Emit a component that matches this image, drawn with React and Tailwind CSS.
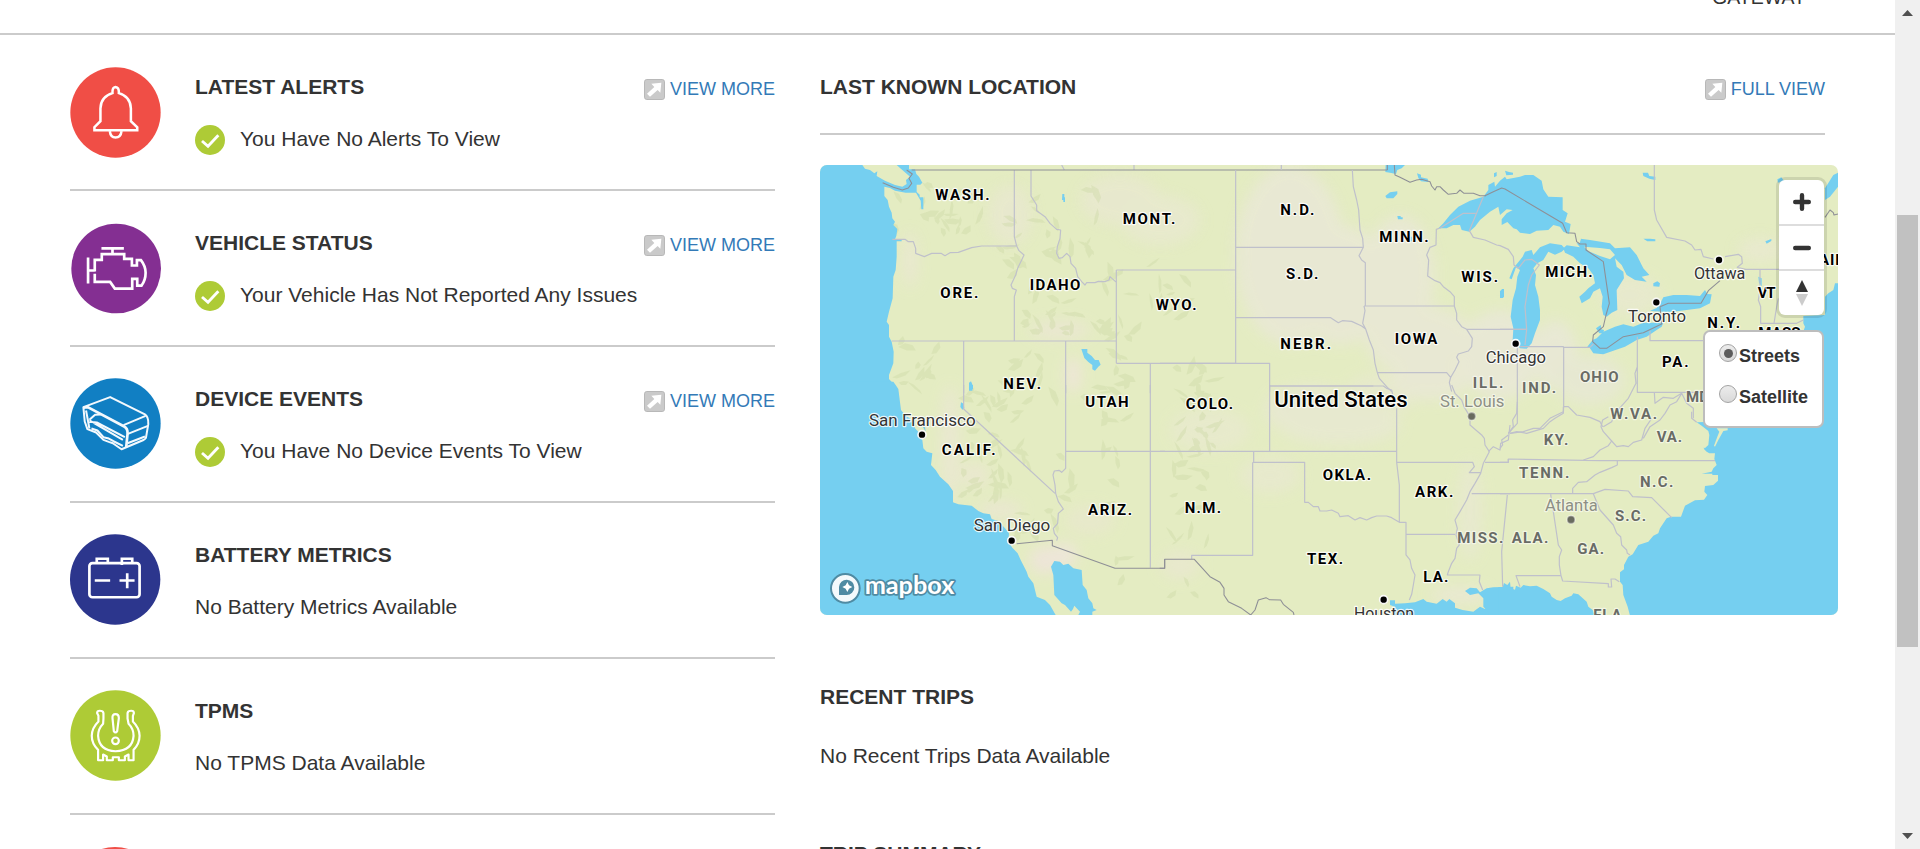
import React from "react";

const WATER = "#75cff0";

/* Map tiles: each tile is drawn on its own 3x grid and shifted into place. */
const TILES = [
  {
    at: "translate(-5 -5) scale(0.33333)",
    water: [
      "M15,15H142L150,26 165,30 178,40 187,34 185,48 210,62 240,75 262,80 275,72 273,60 285,50 262,30 255,24 245,15H282V28H300L304,42 312,50 322,68 316,74 305,74 305,96 314,104 314,112 325,112V148H319L317,122 303,98H272L240,92 225,84 208,80V108L218,120 222,140 230,158 232,175 240,185 235,195 247,207 244,228 240,238H260V244H245L245,290 242,330 235,350 233,415 222,455 215,485 222,495V530L230,545 236,575 235,610 222,645 222,657 242,678 250,700H15Z",
      "M742,102h6v10h2v14h-5v-6h-4z",
      "M799,567H817V578L830,588 840,600 851,600 857,614 850,620 840,632 832,628 832,615 820,606 808,594Z",
      "M462,668l6,-4 6,14 -2,14 -10,0z",
    ],
    state:
      "M598,30V230L605,258 L612,272 627,285 620,300 608,325 602,345 588,375 592,385 604,390 598,410V543 M648,30V108L665,135 665,152 690,170 705,190 725,208 737,210 735,235 727,260 725,280 732,295 742,293 755,280 765,290 768,310 782,325 788,350 800,365 810,375 815,368 840,368 850,364 870,365 882,360 885,350 905,368 M904,330V610 M230,543H904 M446,543V700 M752,543V700 M904,330H1262 M904,610H1262 M1006,610V700 M232,238H270L280,245 295,245 302,265 302,280 328,290 350,280 378,280 390,287 405,278 430,277 470,263 500,258H603 M740,15l8,15 M957,15v15",
    nation: "M290,30H1717 M203,68L235,82 262,90 280,84 290,70 282,55 292,42 275,30",
    labels: [
      ["WASH.", 361, 121, 163], ["ORE.", 376, 415, 114], ["IDAHO", 644, 389, 152],
      ["NEV.", 565, 688, 113], ["MONT.", 923, 193, 158], ["WYO.", 1022, 450, 123],
    ],
  },
  {
    at: "translate(340 -5) scale(0.33333)",
    water: [
      "M677,15H735L725,25 712,30 708,42 690,38 676,36Z",
      "M771,40l12,4 0,8 20,4 2,10 -22,-2 -8,-10z",
      "M676,108L690,97 712,94 712,102 700,115 680,115Z",
      "M712,168h10l0,4h6l0,6h-14z M750,230h6v14h-6z",
      "M1020,395l6,-8h6v24h-10z",
    ],
    state:
      "M227,30V610 M227,262H610 M227,473H512L535,488 547,482 575,484 605,498 617,507 M577,30L580,80 590,120 596,150 600,210 608,235 610,262 597,287 605,300 616,308V438 M612,438H883 M612,438L615,452 608,490 617,507 628,540 640,570 645,610 652,638 658,655 680,680 695,695 M652,638H860L872,652 M883,438L883,410 870,395 850,380 840,368 825,362 803,348 806,300 800,285 810,262 828,255 829,208 840,204 M883,438L890,460 890,480 905,500 920,508 937,535 935,560 925,573 895,582 890,592 897,605 885,630 872,652 868,668 875,695 M920,508H1100 M0,610H329V695 M329,678H640 M364,15v15",
    nation:
      "M682,15V30 M703,15L705,45 720,52 750,67 770,60 785,58 810,65 815,78 825,90 830,80 840,80 850,90 865,103 890,100 900,90 912,100 940,100 960,107 978,107",
    labels: [
      ["N.D.", 361, 165, 102], ["S.D.", 378, 356, 97], ["MINN.", 658, 247, 148],
      ["NEBR.", 361, 567, 152], ["IOWA", 704, 551, 128], ["WIS.", 904, 367, 110],
      ["ILL.", 938, 683, 92, "g"],
    ],
  },
  {
    at: "translate(680 -5) scale(0.33333)",
    water: [
      "M-185,205L-170,190 -150,165 -125,140 -90,122 -50,110 -35,90 -35,75 -17,65 -15,80 0,62 15,50 20,58 60,50 75,45 100,45 125,62 130,88 145,110 188,112V150L203,160 195,185 212,192 207,222 190,215 180,200 160,195 145,210 110,212 90,222 60,218 50,208 40,205 22,186 5,195 5,178 20,160 38,150 20,148 0,165 -5,140 -30,155 -60,180 -75,200 -92,215 -115,210 -120,195 -140,195 -160,205Z",
      "M15,32l12,4 12,2 0,6 -20,2z M-18,40l8,-4 0,12 -8,4z",
      "M60,565L38,540 40,505 32,470 38,420 48,385 52,350 60,330 48,322 35,358 28,355 40,325 68,290 75,275 95,270 100,285 120,262 150,250 185,255 195,266 185,275 165,284 145,275 130,300 112,310 100,325 108,345 105,375 115,410 120,450 120,480 105,520 95,550 80,566Z",
      "M190,265L200,256 240,262 230,250 242,236 270,240 330,250 345,265 390,262 410,285 430,325 448,345 425,350 440,365 405,360 380,345 365,315 345,295 350,320 370,335 372,355 350,390 352,450 335,458 320,470 310,465 305,440 308,410 300,385 280,395 270,415 245,430 238,410 255,395 265,385 285,370 280,345 265,325 240,310 220,290 195,278Z",
      "M262,560L278,540 290,535 310,515 345,500 370,493 400,500 430,488 490,488 485,500 470,510 440,530 410,540 375,560 340,572 310,583 280,580 270,565Z",
      "M450,452L470,444 482,428 490,412 520,405 560,405 600,408 615,390 622,402 635,403 630,430 600,445 560,450 520,455 490,455 462,454Z",
      "M288,505L302,495 304,508 312,510 310,520 298,520Z M460,370l12,-6 8,6 -2,10 -18,-1z M430,236h20l16,2v6h-24z M428,38l16,0 4,10 18,2 0,10 -18,-4 -18,-8z M796,244l18,-7 0,6 -14,8z M775,350l10,5 0,24 -8,-10z M0,392h10v22h-10z M832,58l12,-6 8,10 -18,6z",
      "M975,85L1000,45 1014,38V80L990,110 975,120Z",
      "M1014,370H1005L1000,390 985,400 975,410V465L910,468V490L915,500 908,520 770,520 770,850H1014Z",
    ],
    land: ["M252,260L300,264 330,268 345,285 330,298 300,288 266,274Z M235,232l8,4 -4,14 -10,0z"],
    state:
      "M-180,205L-110,160H-73 M-50,110L-92,212 -80,232 -45,240 -10,255 0,257 25,268 40,290 42,315 55,325 L75,300 95,298 118,315 95,345 85,375 75,440 80,508 75,555 M60,560H190V562L270,562 280,552 M52,560V790L25,820 M191,560V740 M0,508H80 M450,512V542H612 M412,530V697H550L610,697 M412,620L405,640 408,670 385,715 345,760 335,785 310,800 M191,740L205,740 230,765 270,772 300,785 308,800 M191,740L190,760 165,775 150,785 130,805 80,820 50,815 30,820 M780,330V390L775,420 782,440V490H890L910,480 M835,415L830,440 822,490 M463,697L465,730 490,712 520,715 545,700 560,730 580,745 580,775 M545,700L530,725 510,735 495,760 480,780 450,800 430,835 M463,15V150L470,180 500,232 555,243 575,255 585,270 603,268 610,290 640,297 M675,290L715,283 725,290 727,310 712,322 737,328H837",
    nation:
      "M-45,107L-20,95 5,84 15,87 188,190 200,218 225,220 230,245 240,252 258,252 258,270 310,305 328,430 318,465 310,500 280,525 278,545 300,565 320,565 370,530 430,518 485,492 480,440 505,430H603L625,392 660,362 M975,172L990,150 1000,158 1002,165 1014,162",
    labels: [
      ["MICH.", 136, 351, 142], ["N.Y.", 622, 504, 98], ["VT", 773, 413, 54], ["MAINE", 915, 315, 150],
      ["PA.", 486, 620, 80], ["MASS.", 775, 535, 140], ["OHIO", 240, 666, 116, "g"], ["IND.", 66, 698, 102, "g"],
      ["MD.", 558, 727, 80, "g"], ["W.VA.", 331, 777, 140, "g"],
      ["Chicago", -43, 608, 181, "c"], ["Ottawa", 582, 358, 154, "c"], ["Toronto", 384, 485, 174, "c"],
    ],
    dots: [[47, 551], [657, 300], [469, 427]],
  },
  {
    at: "translate(-5 220) scale(0.33333)",
    water: [
      "M15,-10H235L242,0 250,12 258,75 270,90 295,108 300,130 310,140 322,165 325,190 335,200 352,205 348,240 362,255 375,275 400,298 414,318V352L430,358 470,362 490,378 505,385 525,388 530,402 550,408 570,430 582,445 580,470 592,488 608,505 617,525 635,560 640,575 655,595 665,635 690,645 705,660 722,690H15Z",
      "M708,545L718,528 735,530 745,540 760,536 775,550 800,555 803,600 815,615 820,640 832,655 835,670 845,675 832,680 832,690H790L795,680 778,662 774,672 768,680 750,660 740,655 718,630 715,570Z",
      "M438,52l8,4 2,14 -6,4 -6,-8z M462,0h12v12h-6z M332,140l-8,-14 6,0z",
    ],
    state:
      "M446,0V72L720,325 M752,0V250L740,262 732,256 718,258 714,270 720,300 722,325 730,350 745,372 730,385 728,415 715,430 718,445 728,458 725,467 M752,199H1050 M1006,0V548",
    nation: "M605,476L712,466V482L900,550H1049V523",
    labels: [
      ["UTAH", 811, 67, 130], ["CALIF.", 380, 210, 162], ["ARIZ.", 819, 390, 132],
      ["San Francisco", 162, 122, 320, "c"], ["San Diego", 476, 439, 230, "c"],
    ],
    dots: [[321, 149], [590, 467]],
  },
  {
    at: "translate(340 220) scale(0.33333)",
    water: [
      "M690,646H705V656L735,655 765,652 790,642 800,650 830,656 848,642 860,650 868,642 885,655 885,668 908,675 940,680 960,665 975,672 992,655 1000,675 1050,690H705L705,665 690,660Z",
      "M915,618L930,608 950,610 960,622 980,610 1000,607 1060,605V695H985L985,680 970,665 970,640 955,625 930,630Z",
    ],
    state:
      "M0,199H710 M329,0V199 M329,3H670L680,10 695,15 698,28 M281,199V232H434V352L445,352 460,365 475,365 480,378 500,378 515,375 535,385 540,395 565,392 585,405 600,398 620,405 635,398 650,393 680,393 695,398 718,412H738V510L750,525 755,550 765,570 760,600 755,628 748,645 M278,232V511H95V522 M710,70V232L718,300V410 M710,232H938L943,245 928,263H962 M738,448H885 M875,0L885,25 905,45 912,65 930,95 930,120 965,150 973,160 975,180 988,200 970,235 962,265 945,295 930,320 920,345 900,380 885,405 892,430 888,450 898,480 890,490 885,520 875,535 865,560 862,570H960L958,590 968,615 M985,200L1000,185 1020,195 1022,175 1045,165 1050,120 M975,232H1045V222 M935,326H1050",
    nation:
      "M-1,550H14V523H103L150,575 180,592 192,610 192,630 205,650 245,670 272,690 285,675 295,645 318,638 328,644 362,645 370,658 400,682 402,690",
    labels: [
      ["COLO.", 77, 72, 142], ["OKLA.", 488, 285, 145], ["N.M.", 74, 384, 109], ["ARK.", 765, 335, 115],
      ["TEX.", 441, 537, 108], ["LA.", 790, 590, 75], ["MISS.", 892, 473, 138, "g"],
      ["United States", 343, 67, 400, "u"], ["St. Louis", 840, 66, 193, "cg"], ["Houston", 582, 703, 180, "c"],
    ],
    dots: [[935, 94, "g"], [671, 644]],
  },
  {
    at: "translate(680 220) scale(0.33333)",
    water: [
      "M590,112L605,122 625,138 628,150 625,180 612,192 620,200 628,205 645,205 643,222 650,240 640,250 635,260 605,266 637,266 637,270H654V287L640,300 615,303 613,320 622,330 612,344 585,346 555,362 543,395 513,395 500,400 480,430 475,445 460,452 445,470 415,480 398,508 385,515 372,540V553L360,562V590L368,600 370,630 383,665 390,692H1020V100Z",
      "M-5,606H8L12,594 22,600 30,590 32,610 45,614 48,602 62,608 70,600 90,604 110,602 130,612 150,625 155,635 170,645 182,648 195,640 215,632 220,625 235,628 260,650 265,665 278,675 285,692H-5Z",
      "M610,188l12,2 4,12 -6,-4z",
    ],
    land: ["M650,130H683V136L670,138 655,165 645,185 642,182 652,155 658,140Z"],
    state:
      "M0,232H25V222L300,227H645 M0,326H280L315,313 385,318 388,322 398,335 455,338 515,398 M218,326L218,310 235,292 260,290 285,270 300,262 335,248 352,240V227 M22,330L5,500 8,605 M152,328L160,380 175,480 185,495 178,515 178,540 183,572H48L60,605 M183,572L188,588 325,596V606H335L333,582 345,582 358,590 M280,326L300,375 340,420 350,445 362,455 365,480 380,495 382,505 390,510 M250,225L280,215 300,195 325,182 335,168 310,140 303,125 308,105 325,95 M335,168L350,185 370,182 385,185 400,172 425,165 435,130 455,100 M30,145L70,140 100,130 120,130 150,100 190,80 190,65 M0,190L8,180 5,165 25,150 M25,145L40,125 38,105 50,85 52,50 M575,80L575,100 590,112",
    nation: "",
    labels: [
      ["KY.", 131, 180, 74, "g"], ["VA.", 470, 172, 76, "g"], ["TENN.", 57, 279, 151, "g"], ["N.C.", 420, 306, 100, "g"],
      ["ALA.", 35, 475, 110, "g"], ["GA.", 232, 506, 80, "g"], ["S.C.", 345, 409, 93, "g"],
      ["FLA.", 280, 705, 100, "g"], ["Atlanta", 135, 377, 158, "cg"],
    ],
    dots: [[213, 404, "g"]],
  },
];

/* Soft prairie and desert patches: cx, cy, rx, ry, colour */
const PATCHES = [
  [470, 90, 55, 90, "#e9e8d6"], [520, 120, 50, 60, "#e9e8d6"], [580, 110, 35, 60, "#e9e8d6"],
  [600, 175, 55, 35, "#e9e8d6"], [560, 230, 35, 22, "#e7e9cd"], [490, 245, 45, 25, "#e8e8d3"],
  [680, 190, 40, 45, "#e9e8d8"], [735, 190, 22, 35, "#e9e8d8"], [190, 50, 22, 30, "#e8e8cf"],
  [300, 35, 40, 25, "#e8e8cf"], [340, 55, 40, 25, "#e8e9cf"], [240, 165, 30, 9, "#ebe6d4"],
  [253, 210, 8, 18, "#f0e5dc"], [90, 95, 7, 28, "#ebe7d4"], [130, 280, 9, 60, "#ebe7d4"],
  [155, 310, 14, 12, "#ebe7d2"], [225, 395, 16, 14, "#efe4dc"], [245, 390, 12, 12, "#f0e5de"],
  [180, 345, 22, 8, "#ebe6d4"], [390, 265, 40, 22, "#e8eacd"], [450, 310, 30, 18, "#e8e9cf"],
  [640, 430, 30, 8, "#ebe8d6"], [360, 400, 20, 14, "#e9e8cf"], [810, 130, 30, 20, "#e8e9cf"],
  [940, 85, 22, 12, "#e9e9d0"], [770, 215, 35, 25, "#e7e8d4"], [270, 355, 25, 15, "#e8e8cc"],
  [650, 345, 12, 50, "#e8e9d0"], [520, 260, 60, 20, "#e8e9d2"], [610, 215, 40, 20, "#e9e8d6"],
];

/* Mountain ranges: cx, cy, spread x, spread y, count */
const RANGES = [
  [110, 40, 60, 30, 14], [130, 50, 30, 20, 8], [240, 60, 60, 45, 22], [190, 105, 20, 30, 6],
  [245, 145, 55, 28, 22], [330, 135, 55, 50, 22], [100, 200, 25, 30, 12], [175, 270, 40, 55, 20],
  [170, 300, 35, 40, 18], [205, 215, 40, 35, 14], [285, 225, 30, 50, 16], [380, 245, 28, 55, 28],
  [270, 310, 40, 40, 10], [370, 330, 22, 50, 12], [215, 370, 25, 30, 8], [340, 400, 60, 35, 8],
];

function hash(n) {
  const s = Math.sin(n * 127.1 + 11.7) * 43758.5453;
  return s - Math.floor(s);
}

/* Each hill is an irregular five-cornered sliver with its own direction. */
const HILLS = RANGES.flatMap(([cx, cy, sx, sy, count], r) =>
  Array.from({ length: count }, (_, i) => {
    const k = r * 100 + i * 7;
    const x = cx + (hash(k) - 0.5) * 1.7 * sx;
    const y = cy + (hash(k + 1) - 0.5) * 1.7 * sy;
    const len = 4 + hash(k + 2) * 7;
    const wid = 1.5 + hash(k + 3) * 3;
    const turn = hash(k + 4) * Math.PI;
    const c = Math.cos(turn);
    const s = Math.sin(turn);
    const pts = [[-len, 0], [-len * 0.3, -wid], [len * 0.6, -wid * 0.7], [len, wid * 0.4], [0, wid * 0.6]];
    return "M" + pts.map(([a, b]) => `${(x + a * c - b * s).toFixed(1)},${(y + a * s + b * c).toFixed(1)}`).join(" ") + "Z";
  })
).join("");

function MapLabel({ item }) {
  const [text, x, y, w, kind = ""] = item;
  const city = kind.startsWith("c");
  const country = kind === "u";
  const gray = kind.endsWith("g");
  const fill = gray ? (city ? "#8d8f85" : "#696b66") : city ? "#333" : "#000";
  return (
    <text
      x={x}
      y={y}
      textLength={w}
      lengthAdjust={city || country ? "spacingAndGlyphs" : "spacing"}
      fontFamily='Roboto, "Liberation Sans", sans-serif'
      fontSize={country ? 65 : city ? 52 : 45}
      fontWeight={country ? 500 : city ? 400 : 700}
      fill={fill}
      stroke="#fff"
      strokeOpacity={gray ? 0.55 : 0.85}
      strokeWidth="7"
      strokeLinejoin="round"
      paintOrder="stroke"
    >
      {text}
    </text>
  );
}

function MapCanvas() {
  return (
    <svg width="1018" height="450" viewBox="0 0 1018 450" className="block">
      <defs>
        <filter id="soft" x="-50%" y="-50%" width="200%" height="200%">
          <feGaussianBlur stdDeviation="7" />
        </filter>
      </defs>
      <rect width="1018" height="450" fill="#e4ecc2" />
      <g filter="url(#soft)" opacity="0.85">
        {PATCHES.map(([cx, cy, rx, ry, c], i) => (
          <ellipse key={i} cx={cx} cy={cy} rx={rx} ry={ry} fill={c} />
        ))}
      </g>
      <path d={HILLS} fill="#cdd8a6" opacity="0.42" />
      {TILES.map((t, i) => (
        <g key={i} transform={t.at}>
          {t.water.map((d, j) => <path key={j} d={d} fill={WATER} />)}
          {(t.land || []).map((d, j) => <path key={j} d={d} fill="#e4ecc2" />)}
        </g>
      ))}
      {TILES.map((t, i) => (
        <g key={i} transform={t.at} fill="none" strokeLinejoin="round">
          <path d={t.state} stroke="#bfc0cb" strokeWidth="3.6" />
          <path d={t.nation} stroke="#8e8f96" strokeWidth="3.2" />
        </g>
      ))}
      {TILES.map((t, i) => (
        <g key={i} transform={t.at}>
          {(t.dots || []).map(([x, y, g], j) => (
            <circle key={j} cx={x} cy={y} r="12" fill={g ? "#696b5f" : "#000"} stroke="#fff" strokeOpacity={g ? 0.4 : 0.95} strokeWidth="5" />
          ))}
          {t.labels.map((l, j) => <MapLabel key={j} item={l} />)}
        </g>
      ))}
      <g transform="translate(-5 220) scale(0.33333)">
        <circle cx="91" cy="610" r="43" fill="#f4fafc" stroke="#4f8ba3" strokeWidth="6" />
        <path d="M72,630V606A23,23 0 1 1 95,630Z" fill="#4f8ba3" />
        <path d="M97,591l5,10 10,5 -10,5 -5,10 -5,-10 -10,-5 10,-5z" fill="#fff" />
        <text x="149" y="628" textLength="269" lengthAdjust="spacingAndGlyphs" fontFamily="Lato, sans-serif" fontWeight="700" fontSize="74" fill="#fff" stroke="#4f8ba3" strokeWidth="10" strokeLinejoin="round" paintOrder="stroke">mapbox</text>
      </g>
    </svg>
  );
}

function BellIcon() {
  return (
    <svg width="91" height="91" viewBox="61 83 272 272" fill="none" stroke="#fff" strokeWidth="7.5">
      <circle cx="197" cy="219" r="135" fill="#f04e46" stroke="none" />
      <path d="M197,143Q187,144 188,161Q153,171 152,207V245L134,263V272H262V263L243,245V207Q242,171 207,161Q208,144 197,143Z" />
      <path d="M180,275Q182,294 197,294Q213,294 215,275" />
    </svg>
  );
}

function EngineIcon() {
  return (
    <svg width="91" height="91" viewBox="61 551 272 272" fill="none" stroke="#fff" strokeWidth="8">
      <circle cx="199" cy="687" r="134" fill="#842f92" stroke="none" />
      <path d="M155,627H222M188,627V645M115,654V732M115,693H135M135,696V661H156V644H223V658H246V678H261V662H273Q287,680 287,700Q287,722 275,738H262V718H247V747H195L181,727H135V703" />
    </svg>
  );
}

function DeviceIcon() {
  return (
    <svg width="91" height="91" viewBox="60 55 272 272" fill="none" stroke="#f4f9fd" strokeWidth="6" strokeLinejoin="round">
      <circle cx="196" cy="191" r="135" fill="#117fc3" stroke="none" />
      <path d="M100,142L180,112L284,164Q295,171 294,193L287,234Q285,238 278,241L214,268L188,250L176,246L160,240L138,218L112,208L104,185Z" />
      <path d="M100,144L113,142L222,200Q233,206 232,222L228,262" strokeWidth="8" />
      <path d="M108,152L118,206M220,196L286,168M233,222L293,198M232,250L284,230M118,180L135,165L152,164M118,182L218,240M118,186L140,188L224,232M124,206L142,212L160,232L176,236L190,244L218,258" />
    </svg>
  );
}

function BatteryIcon() {
  return (
    <svg width="91" height="91" viewBox="60 523 272 272" fill="none" stroke="#fff" strokeWidth="8">
      <circle cx="195" cy="659" r="135" fill="#2c368d" stroke="none" />
      <rect x="118" y="610" width="150" height="102" rx="9" />
      <path d="M140,610V597H173V610M215,616V597H246V610M134,662H180M208,662H253M231,640V685" />
    </svg>
  );
}

function TpmsIcon() {
  return (
    <svg width="91" height="91" viewBox="61 91 272 272" fill="none" stroke="#fff" strokeWidth="6.5" strokeLinejoin="round">
      <circle cx="197" cy="227" r="135" fill="#aecb36" stroke="none" />
      <path d="M142,160Q142,153 150,153Q160,153 161,160V176L160,192Q145,207 145,228Q148,272 197,274Q248,272 251,228Q251,207 236,192L233,176V160Q234,153 244,153Q252,153 252,160L249,168V185Q269,205 269,228Q269,252 251,270V301H236V284L225,290V301H207V292H189V301H171V290L160,284V301H145V270Q126,252 126,228Q126,205 146,185V168Z" />
      <path d="M197,163Q187,163 188,175L192,214Q197,222 202,214L207,175Q207,163 197,163Z" />
      <circle cx="197" cy="243" r="10" />
    </svg>
  );
}

function CheckIcon() {
  return (
    <svg width="30" height="30" viewBox="0 0 90 90" className="mr-[15px] shrink-0">
      <circle cx="45" cy="45" r="45" fill="#aecb36" />
      <path d="M21,48L39,64L70,31" fill="none" stroke="#fff" strokeWidth="8.5" />
    </svg>
  );
}

function ActionLink({ children }) {
  return (
    <a className="mt-[2px] flex items-center text-[18px] leading-[28px] text-[#337ab7]">
      <svg width="21" height="21" viewBox="0 0 63 63" className="mt-px mr-[5px]">
        <rect x="1.5" y="1.5" width="60" height="60" rx="7" fill="#cacaca" stroke="#b8b8b8" strokeWidth="3" />
        <path d="M22,14L52,11L49,41L41,33L18,53L9,44L31,24Z" fill="#fff" />
      </svg>
      {children}
    </a>
  );
}

const ROWS = [
  { icon: <BellIcon />, pad: "pt-[32px]", title: "LATEST ALERTS", text: "You Have No Alerts To View", ok: true, link: true },
  { icon: <EngineIcon />, pad: "pt-[32px]", title: "VEHICLE STATUS", text: "Your Vehicle Has Not Reported Any Issues", ok: true, link: true },
  { icon: <DeviceIcon />, pad: "pt-[31px]", title: "DEVICE EVENTS", text: "You Have No Device Events To View", ok: true, link: true },
  { icon: <BatteryIcon />, pad: "pt-[31px]", title: "BATTERY METRICS", text: "No Battery Metrics Available" },
  { icon: <TpmsIcon />, pad: "pt-[31px]", title: "TPMS", text: "No TPMS Data Available" },
];

function StatusRow({ row }) {
  return (
    <section className="flex h-[156px] border-b-2 border-[#cbcbcb]">
      <div className={`w-[125px] shrink-0 ${row.pad}`}>{row.icon}</div>
      <div className="flex-1 pt-[38px]">
        <div className="flex h-[30px] items-start justify-between">
          <h2 className="text-[21px] leading-[28px] font-bold">{row.title}</h2>
          {row.link && <ActionLink>VIEW MORE</ActionLink>}
        </div>
        <p className="mt-[22px] flex h-[30px] items-center text-[21px] leading-[28px]">
          {row.ok && <CheckIcon />}
          <span className="pb-[2px]">{row.text}</span>
        </p>
      </div>
    </section>
  );
}

function Radio({ label, checked }) {
  return (
    <label className="flex items-start text-[18px] leading-[20px] font-bold">
      <span className="-mt-px mr-[2px] flex size-[18px] items-center justify-center rounded-full border border-[#a3a3a3] bg-linear-to-b from-[#ececec] to-[#d9d9d9]">
        {checked && <span className="size-[9px] rounded-full bg-[#5c5c5c]" />}
      </span>
      <span className="pt-px">{label}</span>
    </label>
  );
}

function MapPanel() {
  return (
    <div className="relative mt-[30px] h-[450px] w-[1018px] overflow-hidden rounded-[7px]">
      <MapCanvas />
      <div className="absolute top-[15px] right-[14px] flex h-[135px] w-[45px] flex-col divide-y-2 divide-[#ddd] rounded-[6px] bg-white shadow-[0_0_0_3px_rgba(0,0,0,0.1)]">
        <button className="flex flex-1 items-center justify-center">
          <svg width="18" height="18" viewBox="0 0 18 18" stroke="#333" strokeWidth="4.4" strokeLinecap="round">
            <path d="M9,2.2V15.8M2.2,9H15.8" />
          </svg>
        </button>
        <button className="flex flex-1 items-center justify-center">
          <svg width="18" height="18" viewBox="0 0 18 18" stroke="#333" strokeWidth="4.4" strokeLinecap="round">
            <path d="M2.2,9H15.8" />
          </svg>
        </button>
        <button className="flex flex-1 items-center justify-center">
          <svg width="12" height="26" viewBox="0 0 12 26">
            <path d="M6,0L12,12H0Z" fill="#333" />
            <path d="M0,14H12L6,26Z" fill="#ccc" />
          </svg>
        </button>
      </div>
      <div className="absolute top-[165px] right-[14px] flex h-[98px] w-[121px] flex-col gap-[20px] rounded-[7px] border-2 border-[#bdbdbd] bg-white pt-[13px] pl-[14px]">
        <Radio label="Streets" checked />
        <Radio label="Satellite" />
      </div>
    </div>
  );
}

function Scrollbar() {
  return (
    <div className="flex w-[25px] shrink-0 flex-col items-center bg-[#f0f0f0]">
      <svg width="11" height="6" viewBox="0 0 11 6" className="mt-[10px]"><path d="M5.5,0L11,6H0Z" fill="#505050" /></svg>
      <div className="mt-[199px] h-[432px] w-[21px] bg-[#c1c1c1]" />
      <svg width="11" height="6" viewBox="0 0 11 6" className="mt-auto mb-[10px]"><path d="M0,0H11L5.5,6Z" fill="#505050" /></svg>
    </div>
  );
}

export default function App() {
  return (
    <div className="flex h-[849px] w-[1920px] overflow-hidden bg-white font-['Liberation_Sans',Arial,sans-serif] text-[#333]">
      <div className="h-[849px] w-[1895px] overflow-hidden">
        <header className="flex h-[35px] justify-end border-b-2 border-[#cbcbcb] pr-[89px]">
          <span className="-mt-[15px] h-[24px] text-[19.5px] leading-[24px]">GATEWAY</span>
        </header>
        <main className="flex gap-[45px] pl-[70px]">
          <div className="w-[705px] shrink-0">
            {ROWS.map((row) => <StatusRow key={row.title} row={row} />)}
            <div className="pt-[32px]">
              <div className="size-[90px] rounded-full bg-[#f04e46]" />
            </div>
          </div>
          <div className="w-[1018px] shrink-0">
            <div className="flex h-[100px] w-[1005px] items-start justify-between border-b-2 border-[#cbcbcb] pt-[38px]">
              <h2 className="text-[21px] leading-[28px] font-bold">LAST KNOWN LOCATION</h2>
              <ActionLink>FULL VIEW</ActionLink>
            </div>
            <MapPanel />
            <h2 className="mt-[68px] text-[21px] leading-[28px] font-bold">RECENT TRIPS</h2>
            <p className="mt-[31px] text-[21px] leading-[28px]">No Recent Trips Data Available</p>
            <h2 className="mt-[70px] text-[21px] leading-[28px] font-bold">TRIP SUMMARY</h2>
          </div>
        </main>
      </div>
      <Scrollbar />
    </div>
  );
}
